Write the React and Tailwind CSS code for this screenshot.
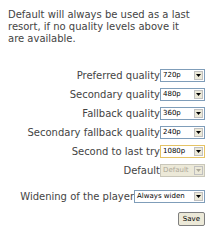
import React from 'react'

const font = { fontFamily: '"DejaVu Sans", Verdana, sans-serif' }

function Select({ value, width = 'w-[45px]', focused = false, disabled = false }) {
  return (
    <div
      className={`flex h-[13px] items-stretch border ${width} ${
        focused ? 'border-[#e5c365]' : disabled ? 'border-[#c9c7ba]' : 'border-[#7f9db9]'
      } ${disabled ? 'bg-[#ece9d8]' : 'bg-white'}`}
    >
      <span
        className={`flex-1 overflow-hidden whitespace-nowrap pl-[2px] text-[7px] leading-[11px] ${
          disabled ? 'text-[#aca899]' : 'text-black'
        }`}
      >
        {value}
      </span>
      <span className="m-[1px] flex w-[9px] items-center justify-center border border-[#c0c0c0] bg-[#ece9d8]">
        <svg width="5" height="3" viewBox="0 0 5 3">
          <path d="M0 0h5L2.5 3z" fill={disabled ? '#aca899' : '#000'} />
        </svg>
      </span>
    </div>
  )
}

function Row({ label, children }) {
  return (
    <div className="flex items-center justify-end">
      <span className="text-[10px] leading-[12px] text-[#444]">{label}</span>
      {children}
    </div>
  )
}

export default function App() {
  return (
    <div className="h-[240px] w-[215px] bg-white px-[8px] pt-[9px]" style={font}>
      <p className="text-[10px] leading-[12px] text-[#444]">
        Default will always be used as a last
        <br />
        resort, if no quality levels above it
        <br />
        are available.
      </p>
      <div className="mt-[24px] flex flex-col gap-[6px] pr-[2px]">
        <Row label="Preferred quality"><Select value="720p" /></Row>
        <Row label="Secondary quality"><Select value="480p" /></Row>
        <Row label="Fallback quality"><Select value="360p" /></Row>
        <Row label="Secondary fallback quality"><Select value="240p" /></Row>
        <Row label="Second to last try"><Select value="1080p" focused /></Row>
        <Row label="Default"><Select value="Default" disabled /></Row>
        <div className="mt-[7px]">
          <Row label="Widening of the player"><Select value="Always widen" width="w-[71px]" /></Row>
        </div>
        <div className="mt-[3px] flex justify-end">
          <button className="h-[14px] rounded-[2px] border border-[#7f7f7f] bg-[#ece9d8] px-[4px] text-[7px] leading-[11px] text-black">
            Save
          </button>
        </div>
      </div>
    </div>
  )
}
